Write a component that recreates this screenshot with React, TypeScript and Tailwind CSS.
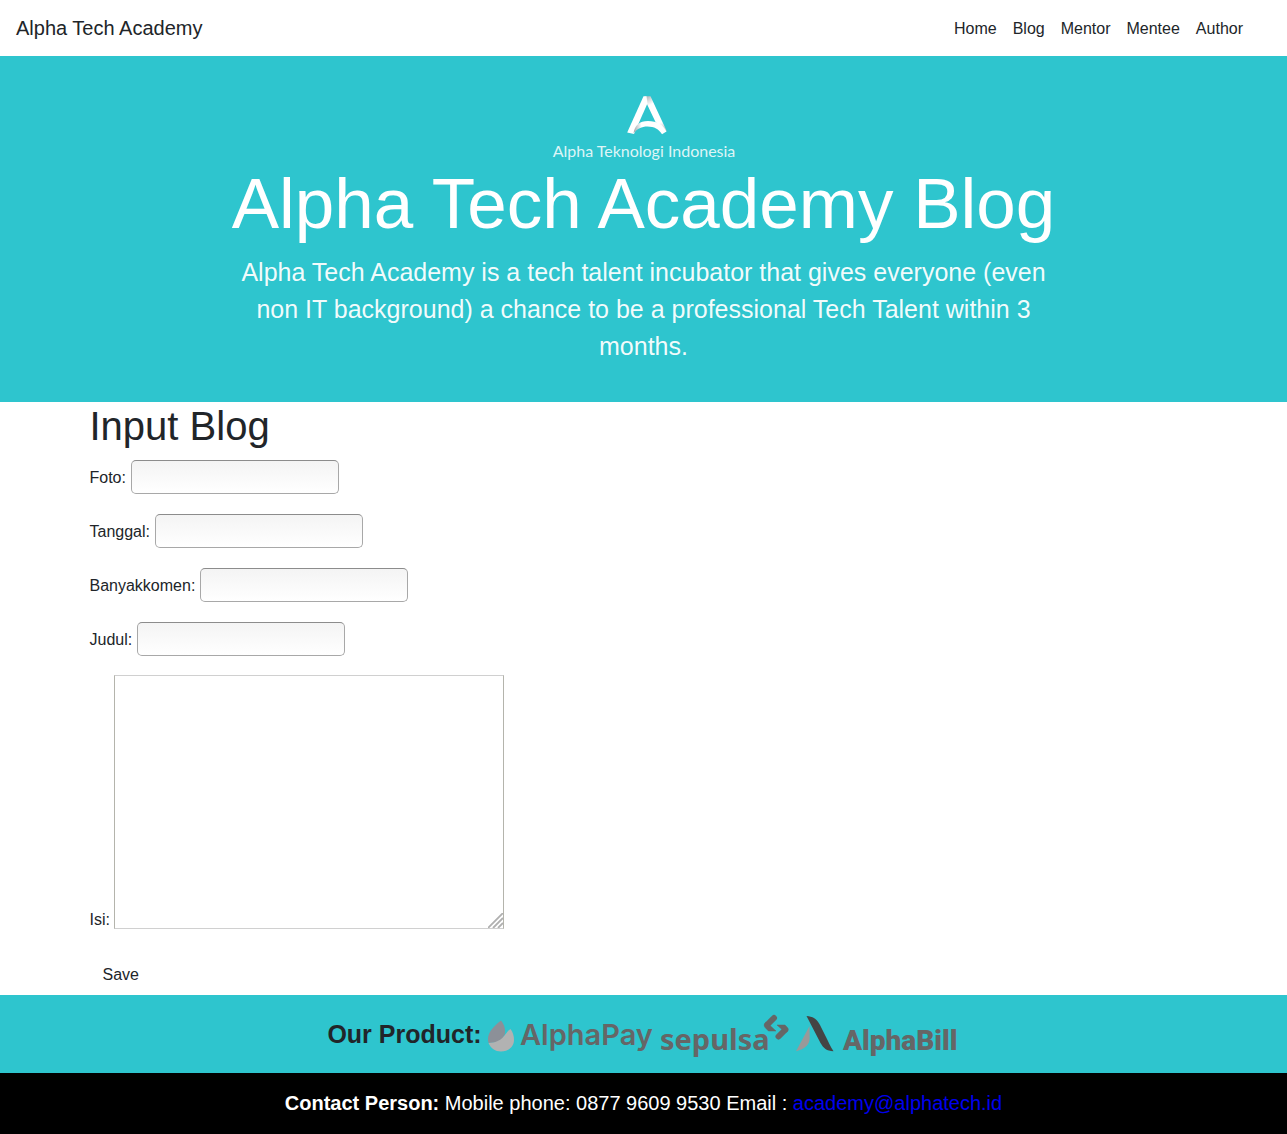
import type { ReactNode } from "react";

const navItems = ["Home", "Blog", "Mentor", "Mentee", "Author"];
const textFields = ["Foto", "Tanggal", "Banyakkomen", "Judul"];

function Navbar() {
  return (
    <nav className="flex h-14 items-center justify-between bg-white pr-9 pl-4">
      <a href="#" className="text-xl">
        Alpha Tech Academy
      </a>
      <ul className="flex pt-0.5">
        {navItems.map((item) => (
          <li key={item}>
            <a href="#" className="block p-2">
              {item}
            </a>
          </li>
        ))}
      </ul>
    </nav>
  );
}

function CompanyLogo() {
  return (
    <svg
      width="200"
      height="71"
      viewBox="0 0 200 71"
      role="img"
      aria-label="Alpha Teknologi Indonesia"
      className="mx-auto block"
    >
      <defs>
        <linearGradient id="right-leg" gradientUnits="userSpaceOnUse" x1="101" y1="7" x2="120" y2="41">
          <stop offset="0" stopColor="#b9bfc2" />
          <stop offset="0.22" stopColor="#fff" />
          <stop offset="0.75" stopColor="#fff" />
          <stop offset="1" stopColor="#a9b4b8" />
        </linearGradient>
        <linearGradient id="arc" gradientUnits="userSpaceOnUse" x1="90" y1="40" x2="122" y2="36">
          <stop offset="0" stopColor="#9fa9ad" />
          <stop offset="0.25" stopColor="#fff" />
          <stop offset="1" stopColor="#fff" />
        </linearGradient>
      </defs>
      <path d="M100.500 5.300h6L118 30l5 10.500L111.500 31 101.500 10z" fill="url(#right-leg)" />
      <path d="M99.500 5.300h3l1 7L90 43l-6.800-1.500z" fill="#fff" />
      <path
        d="M89.500 42.500c1-8 6-12.500 14.500-12.500 9 0 15 3.500 18.500 10.500l-4.500 2.700c-3-5-8-7.700-14.500-7.700-6 0-10 2-14 7z"
        fill="url(#arc)"
      />
      <text
        x="100"
        y="66"
        textAnchor="middle"
        fill="#fff"
        fillOpacity="0.85"
        fontFamily="Lato, sans-serif"
        fontSize="16"
      >
        Alpha Teknologi Indonesia
      </text>
    </svg>
  );
}

function Hero() {
  return (
    <header className="bg-[#2ec5ce] pt-[35px] pb-[37px] text-center text-white">
      <div className="mx-auto max-w-[840px]">
        <CompanyLogo />
        <h1 className="mb-2 text-[71px] leading-[84px]">Alpha Tech Academy Blog</h1>
        <p className="text-[25px] leading-[37px] text-white/95">
          Alpha Tech Academy is a tech talent incubator that gives everyone (even non IT background) a chance to be a
          professional Tech Talent within 3 months.
        </p>
      </div>
    </header>
  );
}

function Row({ children }: { children: ReactNode }) {
  return <div className="mb-5 flex items-center gap-[5px]">{children}</div>;
}

function BlogForm() {
  return (
    <main className="mx-auto max-w-[1140px] px-4">
      <h2 className="mb-2.5 text-[40px] leading-[48px]">Input Blog</h2>
      <form>
        {textFields.map((field) => (
          <Row key={field}>
            <label htmlFor={field} className="pt-0.5">
              {field}:
            </label>
            <input
              id={field}
              type="text"
              className="h-[34px] w-[208px] rounded-[5px] border border-[#a8a8a8] border-t-[#8c8c8c] bg-linear-to-b from-[#f4f4f4] to-white px-2"
            />
          </Row>
        ))}
        <div className="mb-[26px] flex items-end gap-1">
          <label htmlFor="Isi" className="-mb-[3px]">
            Isi:
          </label>
          <div className="relative -mt-px h-[254px] w-[390px]">
            <textarea
              id="Isi"
              className="block size-full resize-none border border-[#b4b4ac] border-t-[#d0d0d0] border-b-[#d0d0d0] bg-white p-1"
            />
            <svg
              width="15"
              height="15"
              viewBox="0 0 15 15"
              className="pointer-events-none absolute right-px bottom-px"
              aria-hidden="true"
            >
              <path d="M0 15L15 0M5 15L15 5M10 15l5-5" stroke="#b0b0b0" strokeWidth="1.800" />
            </svg>
          </div>
        </div>
        <button type="button" className="mb-0.5 block h-[38px] rounded px-[13px] pt-0.5">
          Save
        </button>
      </form>
    </main>
  );
}

function AlphaPayLogo() {
  return (
    <svg width="168" height="52" viewBox="0 -4 168 52" role="img" aria-label="AlphaPay">
      <path d="M13 8.500C6 14 0 20 0 27c0 2 .3 3 .8 4 9 0 14-3 16-9 1-5-.8-10-3.800-13.500z" fill="#8c9098" />
      <path d="M22.500 17c-6 4-7 14-22 14 2 5 7 8.500 12.500 8.500C20.500 39.500 26 34.500 26 28c0-4-1-8-3.500-11z" fill="#b2b2b2" />
      <text x="32" y="33" fill="#666" fontFamily="Inter, sans-serif" fontWeight="600" fontSize="29">
        AlphaPay
      </text>
    </svg>
  );
}

function SepulsaLogo() {
  return (
    <svg width="132" height="52" viewBox="0 -4 132 52" role="img" aria-label="sepulsa">
      <text x="0" y="38" fill="#666" fontFamily="'Noto Sans', sans-serif" fontWeight="700" fontSize="29">
        sepulsa
      </text>
      <g fill="#666" stroke="#666" strokeLinecap="round">
        <path d="M114 6l-6.500 6.500M125 18l-6.500 6.500" fill="none" strokeWidth="6" />
        <path d="M105.500 10.500c-2 2-1.500 4 0 5.500l3 3h7.500l-6-5.500zM127 20c2-2 1.500-3.500 0-5l-2-2h-8l5.500 5z" strokeWidth="0.500" />
      </g>
    </svg>
  );
}

function AlphaBillLogo() {
  return (
    <svg width="164" height="52" viewBox="0 -4 164 52" role="img" aria-label="AlphaBill">
      <path d="M13.500 14L0 39.300c9-2 13.700-7 13.700-13z" fill="#999" />
      <path d="M10.500 4c7 .7 10.500 3 13.500 9l6 12c2 4 4.500 10 7.500 14.300-7-.3-10-3-13-8.300z" fill="#444" />
      <text x="47" y="38" fill="#666" fontFamily="Roboto, sans-serif" fontWeight="900" fontSize="28">
        AlphaBill
      </text>
    </svg>
  );
}

function Footer() {
  return (
    <footer>
      <section className="flex h-[78px] items-center justify-center gap-1 bg-[#2ec5ce]">
        <h3 className="mr-0.5 pt-0.5 text-[25px] font-bold">Our Product:</h3>
        <AlphaPayLogo />
        <SepulsaLogo />
        <AlphaBillLogo />
      </section>
      <section className="bg-black py-[15px] text-center text-xl leading-[31px] text-white">
        <strong>Contact Person:</strong> Mobile phone: 0877 9609 9530 Email :{" "}
        <a href="mailto:academy@alphatech.id" className="text-[#0000ee]">
          academy@alphatech.id
        </a>
      </section>
    </footer>
  );
}

export default function App() {
  return (
    <div className="bg-white font-['Liberation_Sans',Arial,sans-serif] text-base text-[#212529]">
      <Navbar />
      <Hero />
      <BlogForm />
      <Footer />
    </div>
  );
}
